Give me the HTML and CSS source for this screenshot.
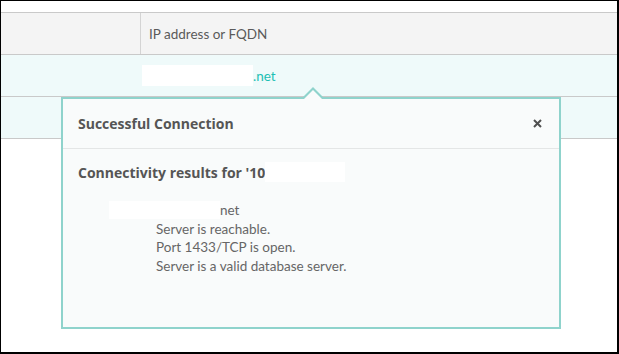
FILE: index.html
```html
<!DOCTYPE html>
<html lang="en">
<head>
    <meta charset="UTF-8">
    <meta name="viewport" content="width=device-width, initial-scale=1.0">
    <title>Server connectivity</title>
    <link rel="stylesheet" href="styles.css">
</head>
<body>
    <div class="frame">
        <div class="grid">
            <div class="row head">
                <div class="cell first"></div>
                <div class="cell">IP address or FQDN</div>
            </div>
            <div class="row">
                <div class="cell first"></div>
                <div class="cell"><span class="redact host"></span><span class="fqdn">.net</span></div>
            </div>
            <div class="row">
                <div class="cell first"></div>
                <div class="cell"></div>
            </div>
        </div>

        <div class="popover">
            <div class="pop-head">
                <span>Successful Connection</span>
                <button class="close" aria-label="Close">
                    <svg width="9" height="9" viewBox="0 0 9 9">
                        <path d="M1 1L8 8M8 1L1 8" stroke="#4f4f4f" stroke-width="2"/>
                    </svg>
                </button>
            </div>
            <div class="pop-body">
                <div class="result-title">Connectivity results for '10<span class="redact ip"></span></div>
                <div class="results">
                    <div class="host-line"><span class="redact name"></span>net</div>
                    <div class="msg">Server is reachable.</div>
                    <div class="msg">Port 1433/TCP is open.</div>
                    <div class="msg">Server is a valid database server.</div>
                </div>
            </div>
        </div>
    </div>
</body>
</html>
```

FILE: styles.css
```css
body {
    margin: 0;
    font-family: "Lato", "Open Sans", sans-serif;
    font-size: 13.5px;
    color: #5a5a5a;
}
.frame {
    position: relative;
    width: 616px;
    height: 340px;
    border-style: solid;
    border-color: #000;
    border-width: 1px 2px 2px 1px;
    padding-top: 11px;
    background: #fff;
}
.grid {
    border-top: 1px solid #c9c9c9;
}
.row {
    display: flex;
    height: 41px;
    border-bottom: 1px solid #c9c9c9;
    background: #effafa;
}
.row.head {
    background: #f4f4f4;
}
.cell {
    display: flex;
    align-items: center;
    flex: 1;
    padding-left: 8px;
}
.cell.first {
    flex: none;
    width: 139px;
    padding: 0;
}
.head .cell.first {
    border-right: 1px solid #d4d4d4;
}
.row:not(.head) .cell {
    padding-left: 1px;
}
.redact {
    display: inline-block;
    background: #fff;
}
.redact.host {
    width: 111px;
    height: 21px;
}
.fqdn {
    color: #1cbfb4;
}
.popover {
    position: absolute;
    left: 60px;
    top: 96px;
    width: 496px;
    height: 228px;
    border: 2px solid #8fd3cc;
    background: #f9fbfb;
}
.popover::before,
.popover::after {
    content: "";
    position: absolute;
    left: 240px;
    width: 0;
    height: 0;
    border-left: 10px solid transparent;
    border-right: 10px solid transparent;
}
.popover::before {
    top: -12px;
    border-bottom: 10px solid #8fd3cc;
}
.popover::after {
    top: -9px;
    border-bottom: 10px solid #f9fbfb;
}
.pop-head {
    display: flex;
    align-items: center;
    justify-content: space-between;
    height: 49px;
    padding: 0 15px;
    border-bottom: 1px solid #e4e6e6;
    font-family: "Open Sans", sans-serif;
    font-size: 14px;
    font-weight: 700;
    color: #555;
}
.close {
    border: none;
    background: none;
    padding: 0;
    margin-right: 2px;
    display: flex;
    cursor: pointer;
}
.pop-body {
    padding: 13px 15px 0;
}
.result-title {
    display: flex;
    align-items: center;
    height: 20px;
    font-family: "Open Sans", sans-serif;
    font-size: 14px;
    font-weight: 700;
    color: #555;
}
.redact.ip {
    width: 80px;
    height: 20px;
}
.results {
    margin-top: 19px;
    line-height: 18.5px;
    color: #666;
}
.host-line {
    display: flex;
    align-items: center;
    padding-left: 31px;
}
.redact.name {
    width: 111px;
    height: 18px;
}
.msg {
    padding-left: 78px;
}
```
